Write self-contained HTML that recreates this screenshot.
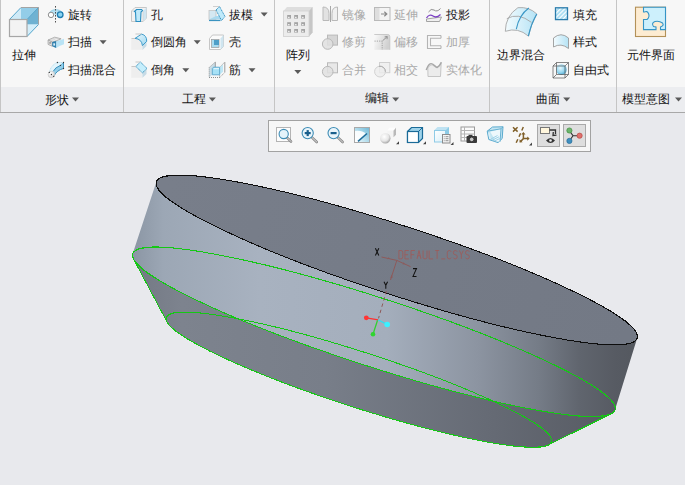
<!DOCTYPE html><html><head><meta charset="utf-8"><style>
html,body{margin:0;padding:0;width:685px;height:485px;overflow:hidden;background:#e8e9ed;}
body{position:relative;font-family:"Liberation Sans",sans-serif;}
.t{position:absolute;font-size:12.3px;line-height:12px;color:#151515;white-space:nowrap;}
.d{color:#a9a9a9;}
.tri{position:absolute;width:0;height:0;border-left:3.5px solid transparent;border-right:3.5px solid transparent;border-top:4px solid #5a5a5a;}
.sep{position:absolute;top:0;width:1px;height:112px;background:#c5c5c5;}
svg{position:absolute;overflow:visible}
</style></head><body>
<div style="position:absolute;left:0;top:0;width:685px;height:87px;background:#f7f7f7"></div>
<div style="position:absolute;left:0;top:87px;width:685px;height:25px;background:#ecedf0"></div>
<div style="position:absolute;left:0;top:112px;width:685px;height:1px;background:#a8a8a8"></div>

<div class="sep" style="left:0px"></div>
<div class="sep" style="left:123px"></div>
<div class="sep" style="left:274px"></div>
<div class="sep" style="left:489px"></div>
<div class="sep" style="left:616px"></div>
<svg style="left:0;top:0" width="685" height="113" viewBox="0 0 685 113">
<defs>
<linearGradient id="ib1" x1="0" y1="0" x2="1" y2="1"><stop offset="0" stop-color="#e9f7fd"/><stop offset="1" stop-color="#9fd8f0"/></linearGradient>
<linearGradient id="ib2" x1="0" y1="0" x2="1" y2="0"><stop offset="0" stop-color="#f3fbfe"/><stop offset="1" stop-color="#b5e3f5"/></linearGradient>
<linearGradient id="ig1" x1="0" y1="0" x2="1" y2="1"><stop offset="0" stop-color="#f8f8f8"/><stop offset="1" stop-color="#d5d5d5"/></linearGradient>
<radialGradient id="isph" cx="0.4" cy="0.35" r="0.7"><stop offset="0" stop-color="#e6f8fe"/><stop offset="0.6" stop-color="#96d6ef"/><stop offset="1" stop-color="#4aa3cc"/></radialGradient>
<radialGradient id="iwsph" cx="0.4" cy="0.35" r="0.7"><stop offset="0" stop-color="#ffffff"/><stop offset="1" stop-color="#cfcfcf"/></radialGradient>
<pattern id="hatch" width="3" height="3" patternUnits="userSpaceOnUse" patternTransform="rotate(45)"><rect width="3" height="3" fill="#a6dcf2"/><rect width="1.2" height="3" fill="#ffffff"/></pattern>
</defs>
<path d="M9.5,19.5 L21,7.5 L38.5,7.5 L38.5,24.5 L27,36.5 L9.5,36.5 Z" fill="#cfeaf7"/>
<path d="M21,7.5 L38.5,7.5 L27,19.5 L21,19.5 Z" fill="#93cde8"/>
<path d="M38.5,7.5 L38.5,24.5 L27,24.5 L27,19.5 Z" fill="#6fb2d2"/>
<path d="M38.5,24.5 L27,36.5 L27,24.5 Z" fill="#d4eefa"/>
<path d="M9.5,19.5 L21,7.5 M27,19.5 L38.5,7.5 M27,36.5 L38.5,24.5" stroke="#55a5cb" stroke-width="1"/>
<path d="M21,7.5 L38.5,7.5 L38.5,24.5" stroke="#a3a3a3" stroke-width="1" fill="none"/>
<rect x="9.5" y="19.5" width="17.5" height="17" fill="#f3f3f3" stroke="#a6a6a6" stroke-width="1.2"/>
<path d="M48.5,14.5 Q50,9.5 55.5,9.3 Q61.5,9.5 63.3,14.2 L60,14.5 L51,14.8 Z" fill="#b9e2f3"/>
<path d="M48.8,13 Q52,9.6 55.5,9.5 Q60,9.6 62.8,12.8" stroke="#8fcbe4" stroke-width="0.8" fill="none"/>
<circle cx="51" cy="14.9" r="2.7" fill="#fff" stroke="#8e8e8e" stroke-width="1"/>
<circle cx="60.2" cy="14.7" r="2.8" fill="#8ad3f1" stroke="#1f7db0" stroke-width="1.3"/>
<path d="M55.5,6 L55.5,22.5" stroke="#505050" stroke-width="1" stroke-dasharray="1.6,1.4"/>
<path d="M56.1,40.9 Q60,40.5 64,38.8 L64,44.2 Q60,45.5 56.1,47.9 Z" fill="#b9e3f5"/>
<path d="M48.1,40 L54.7,37.2 L61.1,38.8 L56.1,40.9 L52.2,42.1 Z" fill="#eeeeee" stroke="#a0a0a0" stroke-width="0.8"/>
<path d="M50,39.8 L55,37.9 L59,39 M50.5,41 L55.5,39" stroke="#c8c8c8" stroke-width="0.6" fill="none"/>
<path d="M48.1,40 L52.2,42.1 L52.2,46.2 L48.1,44.4 Z" fill="#e4e4e4" stroke="#a0a0a0" stroke-width="0.8"/>
<rect x="49.3" y="42" width="1.6" height="1.8" fill="#9a9a9a"/>
<path d="M52.2,42.1 L56.1,40.9 L56.1,47.9 L52.2,46.2 Z" fill="#2e7fae"/>
<rect x="53.3" y="43.3" width="1.8" height="2.3" fill="#dff2fb"/>
<path d="M49.3,72.4 Q51,65 57.4,62.5 L63.5,62.5 L60.5,65.4 Q55,67.5 53.2,71.4 Z" fill="#e3f5fc" stroke="#9fd3ea" stroke-width="0.8" stroke-dasharray="1,0.7"/>
<path d="M53.2,71.4 Q55,67.5 60.5,65.4 L63.5,62.5 L63.5,68.5 Q57,70 53.7,76.3 Z" fill="#93cfea"/>
<path d="M53.2,71.4 Q55,67.5 60.5,65.4 M63.5,62.5 L63.5,68.5 Q57,70 53.7,76.3" stroke="#2f88b6" stroke-width="0.9" fill="none"/>
<path d="M60.5,65.4 L63.5,62.5" stroke="#5aaad0" stroke-width="0.8"/>
<circle cx="51.4" cy="74.5" r="3.3" fill="url(#iwsph)" stroke="#c8c8c8" stroke-width="0.6"/>
<circle cx="51.4" cy="74.5" r="0.65" fill="#333"/>
<circle cx="49.3" cy="72.4" r="0.65" fill="#333"/>
<circle cx="57.4" cy="62.5" r="0.65" fill="#333"/>
<circle cx="63.5" cy="62.5" r="0.65" fill="#333"/>
<circle cx="63.5" cy="68.5" r="0.65" fill="#333"/>
<circle cx="60.5" cy="65.4" r="0.65" fill="#333"/>
<circle cx="53.7" cy="76.3" r="0.65" fill="#333"/>
<path d="M131.5,11 L135,7.5 L146.5,7.5 L146.5,18 L143,21.5 L131.5,21.5 Z" fill="#f2f2f2" stroke="#c2c2c2" stroke-width="0.9"/>
<path d="M143,11 L146.5,7.5 L146.5,18 L143,21.5 Z" fill="#cfe6f2"/>
<path d="M131.5,11 L143,11 L143,21.5" stroke="#d6d6d6" stroke-width="0.9" fill="none"/>
<path d="M134.5,11.5 L136.5,9.5 L141.5,9.5 L142.5,10.5 L141,12 L140.5,21.5 L136,21.5 L135.5,12 Z" fill="#bfe9fa" stroke="#2b8fc2" stroke-width="1.1"/>
<rect x="131.2" y="38.5" width="11.3" height="11.3" fill="#eeeeee"/>
<path d="M142.5,45.5 L146.5,41 L146.5,46 L142.5,50 Z" fill="#c6dbe6"/>
<path d="M135,38.4 L141.6,34.1 Q146.9,35.4 146.7,41.3 L142.4,45.6 Q141.8,39 135,38.4 Z" fill="url(#ib1)" stroke="#3e9ccb" stroke-width="1"/>
<path d="M131.5,38.5 L135,38.5 M135.5,34 L141.5,34" stroke="#bbb" stroke-width="0.8"/>
<rect x="131.2" y="66.5" width="11.3" height="11.3" fill="#eeeeee"/>
<path d="M142.5,72.5 L146.5,68.5 L146.5,74 L142.5,77.8 Z" fill="#c6dbe6"/>
<path d="M135.8,66.5 L140.4,62 L147,68.5 L142.4,72.8 Z" fill="#c5eefc" stroke="#3592c0" stroke-width="1" stroke-dasharray="1.2,0.6"/>
<path d="M131.5,66.5 L135.8,66.5 M135.5,62 L140,62" stroke="#bbb" stroke-width="0.8"/>
<rect x="209" y="10.5" width="7" height="9" fill="#d4e8f2" stroke="#c4c4c4" stroke-width="0.8"/>
<path d="M209,19.5 L221,19.5 L224.5,16 L216,16 Z" fill="#a9d9ef"/>
<path d="M209,20.5 L220.5,20.5" stroke="#3b93c0" stroke-width="1.2"/>
<path d="M216,10 L219.5,6.5 L225,16.5 L221.5,20.5 Z" fill="#bfeafb" stroke="#3592c0" stroke-width="1" stroke-dasharray="1.2,0.6"/>
<path d="M213,6.5 L219,6.5" stroke="#c8c8c8" stroke-width="0.9"/>
<path d="M209.5,38.5 L212.5,35 L223.5,35 L223.5,46.5 L220.5,49.5 L209.5,49.5 Z" fill="#fbfbfb" stroke="#c0c0c0" stroke-width="0.9"/>
<path d="M220.5,38.5 L223.5,35 L223.5,46.5 L220.5,49.5 Z" fill="#cfe5f0"/>
<rect x="211.5" y="39.5" width="7.5" height="8" fill="#a9dcf1" stroke="#9a9a9a" stroke-width="0.7"/>
<rect x="214" y="40" width="5" height="5" fill="#4e9fc8"/>
<path d="M209.2,67.5 L215.3,62 L215.3,72 L209.2,77.5 Z" fill="#c9dde7"/>
<path d="M215.3,62 L215.3,67.5 M224.8,62 L224.8,72.5" stroke="#9c9c9c" stroke-width="1"/>
<path d="M209.2,67.5 L209.2,77.5 L219.6,77.5 L224.8,72.5 M219.6,77.5 L219.6,67.5" stroke="#777" stroke-width="1" fill="none" stroke-dasharray="0.8,1.2"/>
<path d="M209.2,67.5 L215.3,62 M219.6,67.5 L224.8,62" stroke="#b5b5b5" stroke-width="0.8" fill="none"/>
<path d="M219.6,67.5 L223,64.5 L223,71.8 L219.6,74.8 Z" fill="#bfe6f5"/>
<path d="M212.3,68.5 L213.5,67.2 L219.6,67.2 L219.6,74.8 L212.3,74.8 Z" fill="#a6e1f6" stroke="#5aa6cd" stroke-width="0.9"/>
<path d="M213.8,68.7 L219,68.7" stroke="#ffffff" stroke-width="0.8"/>
<path d="M283.5,11 L287,7 L312.5,7 L312.5,32.5 L309,36.5 L283.5,36.5 Z" fill="#dedede"/>
<path d="M309,11 L312.5,7 L312.5,32.5 L309,36.5 Z" fill="#c6c6c6"/>
<rect x="283.5" y="11" width="25.5" height="25.5" fill="#ececec" stroke="#d2d2d2" stroke-width="0.8"/>
<rect x="287.2" y="15" width="3.8" height="3.6" fill="#a3a3a3"/><rect x="288.2" y="16.8" width="1.3" height="1.3" fill="#fff"/>
<rect x="294.2" y="15" width="3.8" height="3.6" fill="#a3a3a3"/><rect x="295.2" y="16.8" width="1.3" height="1.3" fill="#fff"/>
<rect x="301.2" y="15" width="3.8" height="3.6" fill="#a3a3a3"/><rect x="302.2" y="16.8" width="1.3" height="1.3" fill="#fff"/>
<rect x="287.2" y="22.2" width="3.8" height="3.6" fill="#a3a3a3"/><rect x="288.2" y="24.0" width="1.3" height="1.3" fill="#fff"/>
<rect x="294.2" y="22.2" width="3.8" height="3.6" fill="#a3a3a3"/><rect x="295.2" y="24.0" width="1.3" height="1.3" fill="#fff"/>
<rect x="301.2" y="22.2" width="3.8" height="3.6" fill="#a3a3a3"/><rect x="302.2" y="24.0" width="1.3" height="1.3" fill="#fff"/>
<rect x="287.2" y="29" width="3.8" height="3.6" fill="#a3a3a3"/><rect x="288.2" y="30.8" width="1.3" height="1.3" fill="#fff"/>
<rect x="294.2" y="29" width="3.8" height="3.6" fill="#a3a3a3"/><rect x="295.2" y="30.8" width="1.3" height="1.3" fill="#fff"/>
<rect x="301.2" y="29" width="3.8" height="3.6" fill="#a3a3a3"/><rect x="302.2" y="30.8" width="1.3" height="1.3" fill="#fff"/>
<path d="M323,20.5 L323,7 Q329,7 329,13.5 L329,20.5 Z" fill="#e2e2e2" stroke="#b9b9b9" stroke-width="1"/>
<path d="M337.5,20.5 L337.5,7 Q332,7 332,13.5 L332,20.5 Z" fill="#f0f0f0" stroke="#b9b9b9" stroke-width="1"/>
<path d="M330.5,6 L330.5,22" stroke="#9d9d9d" stroke-width="0.9"/>
<rect x="327.5" y="35.1" width="10" height="10" fill="#d6d6d6" stroke="#b9b9b9" stroke-width="1"/>
<circle cx="327.7" cy="44.0" r="5.3" fill="#e0e0e0" fill-opacity="0.85" stroke="#b9b9b9" stroke-width="1"/>
<rect x="327.5" y="62.8" width="10" height="10" fill="#e8e8e8" stroke="#b9b9b9" stroke-width="1"/>
<circle cx="327.7" cy="71.7" r="5.3" fill="#e0e0e0" fill-opacity="0.85" stroke="#b9b9b9" stroke-width="1"/>
<rect x="374.5" y="7.5" width="15.5" height="13" fill="#f4f4f4" stroke="#b9b9b9" stroke-width="1"/>
<rect x="375" y="8" width="4.5" height="12" fill="#dedede"/>
<path d="M381,14 L386.5,14 M384.3,11.8 L386.8,14 L384.3,16.2" stroke="#8a8a8a" stroke-width="1.2" fill="none"/>
<defs><linearGradient id="ig2" x1="0" y1="0" x2="1" y2="0.3"><stop offset="0" stop-color="#fafafa"/><stop offset="1" stop-color="#d0d0d0"/></linearGradient></defs>
<path d="M374.3,34.5 L387.8,34.5 Q389.8,34.5 389.8,36.5 L389.8,49.8 L374.3,49.8 Z" fill="url(#ig2)"/>
<path d="M374.3,34.5 L387.8,34.5 Q389.8,34.5 389.8,36.5 L389.8,49.8" stroke="#c4c4c4" stroke-width="0.9" fill="none"/>
<path d="M374.5,41.1 L382.2,41.1 L382.2,49.8" stroke="#9a9a9a" stroke-width="0.9" fill="none" stroke-dasharray="1.2,1.1"/>
<path d="M382.5,40.8 L386.8,37" stroke="#8a8a8a" stroke-width="0.9"/><path d="M384.6,36.9 L387.3,36.5 L387,39.2" stroke="#8a8a8a" stroke-width="0.9" fill="none"/>
<rect x="379.5" y="62.5" width="10.3" height="10.2" fill="#f0f0f0" stroke="#d0d0d0" stroke-width="1"/>
<circle cx="380" cy="71.6" r="5.4" fill="#ececec" fill-opacity="0.8" stroke="#d2d2d2" stroke-width="1"/>
<path d="M379,66.3 A5.4,5.4 0 0 1 385.4,71.8" stroke="#aaaaaa" stroke-width="1" fill="none"/>
<path d="M428.5,12 Q431,8 434,10 Q437,12.5 440.5,8.5" stroke="#8f8f8f" stroke-width="1" fill="none"/>
<path d="M426.5,19 L441.5,17 L439.5,21.5 L426.5,21.5 Z" fill="#f0f0f0" stroke="#9a9a9a" stroke-width="0.9"/>
<path d="M426.5,18 Q429.5,13.5 433,16 Q436.5,18.5 440.5,14.5" stroke="#7b3fc4" stroke-width="1.3" fill="none"/>
<path d="M441,35.5 L427.5,35.5 L427.5,48.5 L441,48.5" stroke="#b4b4b4" stroke-width="1.1" fill="none"/>
<path d="M441,38.3 L430.5,38.3 L430.5,45.7 L441,45.7" stroke="#b4b4b4" stroke-width="1.1" fill="none"/>
<path d="M441,35.5 L441,38.3 M441,45.7 L441,48.5" stroke="#b4b4b4" stroke-width="1.1"/>
<path d="M427.8,68 Q431,62.5 434.5,66.5 Q437.5,70 441.2,62.5 L440.5,76.5 L428,76.5 Z" fill="#ececec" stroke="#c0c0c0" stroke-width="0.9"/>
<path d="M426.2,70 Q429,62 432.5,64 Q435,66 437,67.5 Q439.5,66.5 441.3,62.3" stroke="#a8a8a8" stroke-width="1.4" fill="none"/>
<path d="M505.3,31.3 Q505.5,16 517.9,7.7 Q529,6.5 536.8,14 Q531,24 528.4,36.1 Q518,27 505.3,31.3 Z" fill="url(#ib2)" stroke="#a6a6a6" stroke-width="0.9"/>
<path d="M506.8,18.7 Q518,12 531.5,22.4" stroke="#a6a6a6" stroke-width="0.9" fill="none"/>
<path d="M528.9,8 Q519,15 516.3,29.2" stroke="#3a97c6" stroke-width="1.1" fill="none"/>
<path d="M536.8,14 Q531,24 528.4,36.1" stroke="#3a97c6" stroke-width="1.2" fill="none"/>
<rect x="555.5" y="7.8" width="12" height="11.8" fill="url(#hatch)" stroke="#2a7bab" stroke-width="1.3"/>
<path d="M553.5,38 Q561,31.5 568.5,38 L568.5,48.5 Q561,42.5 553.5,47 Z" fill="url(#ib2)" stroke="#9a9a9a" stroke-width="0.9"/>
<circle cx="561.4" cy="69.6" r="5.3" fill="url(#isph)"/>
<path d="M553,66 L556.5,62.5 L568.5,62.5 L568.5,74.5 L565,78 L553,78 Z M553,66 L565,66 L565,78 M565,66 L568.5,62.5 M553,78 L556.5,74.5 L568.5,74.5 M556.5,62.5 L556.5,74.5" stroke="#555" stroke-width="0.7" fill="none"/>
<rect x="635.5" y="7.2" width="30" height="29.3" fill="#fdecd2" stroke="#b39158" stroke-width="1.1"/>
<path d="M643.5,7.2 L665.5,7.2 L665.5,29.6 L660.5,29.6 L660.5,27 Q664.5,25.5 662.5,23 Q659,20.5 655,21.5 Q651,23 653.5,26.5 L656,27 L656,29.6 L643.5,29.6 L643.5,19.5 L647,19.5 Q650,17 648.5,13.5 Q647,10.5 644.5,12 L643.5,12 Z" fill="#cdf0fc" stroke="#3594c6" stroke-width="1.1"/>
</svg>
<div class="t" style="left:12.3px;top:48.9px">拉伸</div>
<div class="t" style="left:68.0px;top:8.7px">旋转</div>
<div class="t" style="left:68.0px;top:35.9px">扫描</div>
<div class="t" style="left:68.0px;top:63.9px">扫描混合</div>
<div class="t" style="left:44.6px;top:93.5px">形状</div>
<div class="t" style="left:151.2px;top:8.7px">孔</div>
<div class="t" style="left:151.2px;top:35.9px">倒圆角</div>
<div class="t" style="left:151.2px;top:63.9px">倒角</div>
<div class="t" style="left:229.2px;top:8.7px">拔模</div>
<div class="t" style="left:229.2px;top:35.9px">壳</div>
<div class="t" style="left:229.2px;top:63.9px">筋</div>
<div class="t" style="left:182.0px;top:92.7px">工程</div>
<div class="t" style="left:286.2px;top:48.8px">阵列</div>
<div class="t d" style="left:342.0px;top:8.7px">镜像</div>
<div class="t d" style="left:342.0px;top:35.9px">修剪</div>
<div class="t d" style="left:342.0px;top:63.9px">合并</div>
<div class="t d" style="left:393.5px;top:8.7px">延伸</div>
<div class="t d" style="left:393.5px;top:35.9px">偏移</div>
<div class="t d" style="left:393.5px;top:63.9px">相交</div>
<div class="t" style="left:446.2px;top:8.7px">投影</div>
<div class="t d" style="left:446.2px;top:35.9px">加厚</div>
<div class="t d" style="left:446.2px;top:63.9px">实体化</div>
<div class="t" style="left:364.8px;top:92.3px">编辑</div>
<div class="t" style="left:496.8px;top:48.8px">边界混合</div>
<div class="t" style="left:573.2px;top:8.7px">填充</div>
<div class="t" style="left:573.2px;top:35.9px">样式</div>
<div class="t" style="left:573.2px;top:63.9px">自由式</div>
<div class="t" style="left:536.3px;top:93.4px">曲面</div>
<div class="t" style="left:627.0px;top:48.8px">元件界面</div>
<div class="t" style="left:622.0px;top:92.9px">模型意图</div>
<svg style="left:0;top:0" width="685" height="113"><path d="M99.6,40.3 l7,0 l-3.5,4 z" fill="#5a5a5a"/><path d="M72.0,97.5 l7,0 l-3.5,4 z" fill="#5a5a5a"/><path d="M193.7,40.3 l7,0 l-3.5,4 z" fill="#5a5a5a"/><path d="M182.3,68.3 l7,0 l-3.5,4 z" fill="#5a5a5a"/><path d="M260.7,12.5 l7,0 l-3.5,4 z" fill="#5a5a5a"/><path d="M248.5,68.3 l7,0 l-3.5,4 z" fill="#5a5a5a"/><path d="M208.9,97.5 l7,0 l-3.5,4 z" fill="#5a5a5a"/><path d="M294.3,70.0 l7,0 l-3.5,4 z" fill="#5a5a5a"/><path d="M392.2,97.5 l7,0 l-3.5,4 z" fill="#5a5a5a"/><path d="M563.2,97.5 l7,0 l-3.5,4 z" fill="#5a5a5a"/><path d="M675.0,97.5 l7,0 l-3.5,4 z" fill="#5a5a5a"/></svg>
<svg style="left:0;top:0" width="685" height="485" viewBox="0 0 685 485">
<defs>
<linearGradient id="gc" gradientUnits="userSpaceOnUse" x1="133" y1="0" x2="640" y2="0">
<stop offset="0" stop-color="#8b96a4"/><stop offset="0.06" stop-color="#9ca7b5"/><stop offset="0.25" stop-color="#a8b2c0"/><stop offset="0.5" stop-color="#a4aebc"/><stop offset="0.68" stop-color="#8c94a1"/><stop offset="0.8" stop-color="#757c87"/><stop offset="0.88" stop-color="#60656e"/><stop offset="0.95" stop-color="#575b63"/><stop offset="1" stop-color="#54585f"/></linearGradient>
<linearGradient id="gh" gradientUnits="userSpaceOnUse" x1="133" y1="0" x2="615" y2="0">
<stop offset="0" stop-color="#737984"/><stop offset="0.1" stop-color="#7d838e"/><stop offset="0.4" stop-color="#787e89"/><stop offset="0.75" stop-color="#656a74"/><stop offset="1" stop-color="#575b63"/></linearGradient>
<linearGradient id="gt" gradientUnits="userSpaceOnUse" x1="155" y1="0" x2="638" y2="0">
<stop offset="0" stop-color="#787e8a"/><stop offset="1" stop-color="#737985"/></linearGradient>
</defs>
<path d="M132.5,255.3 L132.5,255.0 L132.5,254.7 L132.6,254.4 L132.7,254.1 L132.7,253.8 L132.8,253.5 L133.0,253.2 L133.1,253.0 L133.3,252.7 L133.4,252.4 L133.6,252.2 L133.8,251.9 L134.1,251.7 L134.3,251.5 L134.6,251.2 L134.9,251.0 L135.2,250.8 L135.5,250.6 L135.8,250.4 L136.2,250.2 L136.6,250.0 L137.0,249.8 L137.4,249.6 L137.8,249.4 L138.2,249.3 L138.7,249.1 L139.2,249.0 L139.7,248.8 L140.2,248.7 L140.8,248.5 L141.3,248.4 L141.9,248.3 L142.5,248.2 L143.1,248.1 L143.7,248.0 L144.3,247.9 L145.0,247.8 L145.7,247.7 L146.4,247.6 L147.1,247.5 L147.8,247.5 L148.6,247.4 L149.3,247.4 L150.1,247.3 L150.9,247.3 L151.7,247.2 L152.6,247.2 L153.4,247.2 L154.3,247.2 L155.2,247.2 L156.1,247.2 L157.0,247.2 L157.9,247.2 L158.9,247.2 L159.8,247.2 L160.8,247.3 L161.8,247.3 L162.8,247.3 L163.8,247.4 L164.9,247.4 L166.0,247.5 L167.0,247.6 L168.1,247.7 L169.2,247.7 L170.4,247.8 L171.5,247.9 L172.7,248.0 L173.8,248.1 L175.0,248.3 L176.2,248.4 L177.4,248.5 L178.7,248.6 L179.9,248.8 L181.2,248.9 L182.4,249.1 L183.7,249.2 L185.0,249.4 L186.4,249.6 L187.7,249.7 L189.0,249.9 L190.4,250.1 L191.8,250.3 L193.2,250.5 L194.6,250.7 L196.0,250.9 L197.4,251.2 L198.9,251.4 L200.3,251.6 L201.8,251.9 L203.3,252.1 L204.8,252.4 L206.3,252.6 L207.8,252.9 L209.3,253.2 L210.9,253.4 L212.4,253.7 L214.0,254.0 L215.6,254.3 L217.2,254.6 L218.8,254.9 L220.4,255.2 L222.1,255.5 L223.7,255.9 L225.4,256.2 L227.0,256.5 L228.7,256.9 L230.4,257.2 L232.1,257.6 L233.8,257.9 L235.5,258.3 L237.2,258.6 L239.0,259.0 L240.7,259.4 L242.5,259.8 L244.3,260.2 L246.1,260.6 L247.8,261.0 L249.6,261.4 L251.5,261.8 L253.3,262.2 L255.1,262.6 L256.9,263.1 L258.8,263.5 L260.6,263.9 L262.5,264.4 L264.4,264.8 L266.3,265.3 L268.2,265.7 L270.1,266.2 L272.0,266.7 L273.9,267.1 L275.8,267.6 L277.7,268.1 L279.7,268.6 L281.6,269.1 L283.5,269.6 L285.5,270.1 L287.5,270.6 L289.4,271.1 L291.4,271.6 L293.4,272.1 L295.4,272.7 L297.4,273.2 L299.4,273.7 L301.4,274.3 L303.4,274.8 L305.4,275.4 L307.4,275.9 L309.5,276.5 L311.5,277.0 L313.5,277.6 L315.6,278.2 L317.6,278.8 L319.7,279.3 L321.7,279.9 L323.8,280.5 L325.9,281.1 L327.9,281.7 L330.0,282.3 L332.1,282.9 L334.1,283.5 L336.2,284.1 L338.3,284.7 L340.4,285.3 L342.5,285.9 L344.6,286.6 L346.7,287.2 L348.7,287.8 L350.8,288.4 L352.9,289.1 L355.0,289.7 L357.1,290.4 L359.2,291.0 L361.3,291.7 L363.4,292.3 L365.6,293.0 L367.7,293.6 L369.8,294.3 L371.9,294.9 L374.0,295.6 L376.1,296.3 L378.2,297.0 L380.3,297.6 L382.4,298.3 L384.5,299.0 L386.6,299.7 L388.7,300.4 L390.8,301.0 L392.9,301.7 L395.0,302.4 L397.1,303.1 L399.2,303.8 L401.3,304.5 L403.4,305.2 L405.5,305.9 L407.6,306.6 L409.7,307.3 L411.7,308.0 L413.8,308.7 L415.9,309.5 L418.0,310.2 L420.0,310.9 L422.1,311.6 L424.2,312.3 L426.2,313.0 L428.3,313.8 L430.3,314.5 L432.4,315.2 L434.4,315.9 L436.4,316.7 L438.5,317.4 L440.5,318.1 L442.5,318.8 L444.5,319.6 L446.6,320.3 L448.6,321.0 L450.6,321.8 L452.6,322.5 L454.5,323.2 L456.5,324.0 L458.5,324.7 L460.5,325.4 L462.4,326.2 L464.4,326.9 L466.3,327.7 L468.3,328.4 L470.2,329.1 L472.1,329.9 L474.1,330.6 L476.0,331.3 L477.9,332.1 L479.8,332.8 L481.7,333.6 L483.5,334.3 L485.4,335.0 L487.3,335.8 L489.1,336.5 L491.0,337.3 L492.8,338.0 L494.7,338.7 L496.5,339.5 L498.3,340.2 L500.1,340.9 L501.9,341.7 L503.7,342.4 L505.4,343.1 L507.2,343.9 L508.9,344.6 L510.7,345.3 L512.4,346.1 L514.1,346.8 L515.8,347.5 L517.5,348.2 L519.2,349.0 L520.9,349.7 L522.6,350.4 L524.2,351.1 L525.9,351.8 L527.5,352.6 L529.1,353.3 L530.7,354.0 L532.3,354.7 L533.9,355.4 L535.5,356.1 L537.0,356.8 L538.6,357.5 L540.1,358.2 L541.6,358.9 L543.1,359.6 L544.6,360.3 L546.1,361.0 L547.6,361.7 L549.0,362.4 L550.5,363.1 L551.9,363.8 L553.3,364.5 L554.7,365.1 L556.1,365.8 L557.5,366.5 L558.8,367.2 L560.2,367.8 L561.5,368.5 L562.8,369.2 L564.1,369.8 L565.4,370.5 L566.7,371.1 L568.0,371.8 L569.2,372.4 L570.4,373.1 L571.7,373.7 L572.9,374.4 L574.0,375.0 L575.2,375.6 L576.4,376.3 L577.5,376.9 L578.6,377.5 L579.7,378.1 L580.8,378.8 L581.9,379.4 L583.0,380.0 L584.0,380.6 L585.0,381.2 L586.0,381.8 L587.0,382.4 L588.0,383.0 L589.0,383.6 L589.9,384.1 L590.9,384.7 L591.8,385.3 L592.7,385.9 L593.6,386.4 L594.4,387.0 L595.3,387.6 L596.1,388.1 L596.9,388.7 L597.7,389.2 L598.5,389.7 L599.3,390.3 L600.0,390.8 L600.7,391.3 L601.4,391.9 L602.1,392.4 L602.8,392.9 L603.5,393.4 L604.1,393.9 L604.7,394.4 L605.3,394.9 L605.9,395.4 L606.5,395.9 L607.1,396.4 L607.6,396.8 L608.1,397.3 L608.6,397.8 L609.1,398.2 L609.6,398.7 L610.0,399.1 L610.4,399.6 L610.8,400.0 L611.2,400.5 L611.6,400.9 L612.0,401.3 L612.3,401.7 L612.6,402.1 L612.9,402.6 L613.2,403.0 L613.5,403.4 L613.7,403.7 L613.9,404.1 L614.2,404.5 L614.3,404.9 L614.5,405.3 L614.7,405.6 L614.8,406.0 L614.9,406.3 L615.0,406.7 L615.1,407.0 L615.2,407.4 L615.2,407.7 L615.2,408.0 L615.3,408.3 L615.2,408.7 L615.2,409.0 L615.2,409.3 L615.1,409.6 L615.0,409.8 L614.9,410.1 L614.8,410.4 L614.7,410.7 L614.5,410.9 L614.3,411.2 L614.1,411.5 L613.9,411.7 L613.7,411.9 L613.4,412.2 L613.2,412.4 L612.9,412.6 L612.6,412.9 L612.3,413.1 L611.9,413.3 L611.6,413.5 L611.2,413.7 L548.5,444.9 L548.2,445.1 L547.8,445.2 L547.5,445.4 L547.1,445.5 L546.8,445.6 L546.4,445.7 L546.0,445.9 L545.6,446.0 L545.1,446.1 L544.7,446.2 L544.2,446.3 L543.8,446.4 L543.3,446.5 L542.8,446.6 L542.3,446.7 L541.7,446.7 L541.2,446.8 L540.6,446.9 L540.1,446.9 L539.5,447.0 L538.9,447.0 L538.3,447.1 L537.7,447.1 L537.0,447.1 L536.4,447.2 L535.7,447.2 L535.0,447.2 L534.3,447.2 L533.6,447.2 L532.9,447.2 L532.2,447.2 L531.4,447.2 L530.7,447.2 L529.9,447.2 L529.1,447.2 L528.3,447.1 L527.5,447.1 L526.7,447.1 L525.8,447.0 L525.0,447.0 L524.1,446.9 L523.3,446.9 L522.4,446.8 L521.5,446.7 L520.6,446.7 L519.6,446.6 L518.7,446.5 L517.8,446.4 L516.8,446.3 L515.8,446.2 L514.8,446.1 L513.9,446.0 L512.8,445.9 L511.8,445.8 L510.8,445.6 L509.8,445.5 L508.7,445.4 L507.6,445.2 L506.6,445.1 L505.5,444.9 L504.4,444.8 L503.3,444.6 L502.1,444.5 L501.0,444.3 L499.9,444.1 L498.7,443.9 L497.5,443.8 L496.4,443.6 L495.2,443.4 L494.0,443.2 L492.8,443.0 L491.6,442.8 L490.3,442.6 L489.1,442.3 L487.9,442.1 L486.6,441.9 L485.3,441.7 L484.1,441.4 L482.8,441.2 L481.5,440.9 L480.2,440.7 L478.9,440.4 L477.5,440.2 L476.2,439.9 L474.9,439.6 L473.5,439.3 L472.2,439.1 L470.8,438.8 L469.4,438.5 L468.0,438.2 L466.6,437.9 L465.2,437.6 L463.8,437.3 L462.4,437.0 L461.0,436.7 L459.6,436.4 L458.1,436.0 L456.7,435.7 L455.2,435.4 L453.8,435.0 L452.3,434.7 L450.8,434.4 L449.3,434.0 L447.8,433.7 L446.4,433.3 L444.8,432.9 L443.3,432.6 L441.8,432.2 L440.3,431.8 L438.8,431.5 L437.2,431.1 L435.7,430.7 L434.1,430.3 L432.6,429.9 L431.0,429.5 L429.5,429.1 L427.9,428.7 L426.3,428.3 L424.8,427.9 L423.2,427.5 L421.6,427.1 L420.0,426.6 L418.4,426.2 L416.8,425.8 L415.2,425.4 L413.6,424.9 L412.0,424.5 L410.3,424.0 L408.7,423.6 L407.1,423.1 L405.4,422.7 L403.8,422.2 L402.2,421.8 L400.5,421.3 L398.9,420.8 L397.2,420.4 L395.6,419.9 L393.9,419.4 L392.3,419.0 L390.6,418.5 L389.0,418.0 L387.3,417.5 L385.6,417.0 L384.0,416.5 L382.3,416.0 L380.6,415.5 L379.0,415.0 L377.3,414.5 L375.6,414.0 L373.9,413.5 L372.2,413.0 L370.6,412.5 L368.9,412.0 L367.2,411.4 L365.5,410.9 L363.8,410.4 L362.2,409.9 L360.5,409.3 L358.8,408.8 L357.1,408.3 L355.4,407.7 L353.7,407.2 L352.1,406.7 L350.4,406.1 L348.7,405.6 L347.0,405.0 L345.3,404.5 L343.7,403.9 L342.0,403.4 L340.3,402.8 L338.6,402.3 L337.0,401.7 L335.3,401.2 L333.6,400.6 L332.0,400.1 L330.3,399.5 L328.6,398.9 L327.0,398.4 L325.3,397.8 L323.7,397.2 L322.0,396.7 L320.4,396.1 L318.7,395.5 L317.1,394.9 L315.4,394.4 L313.8,393.8 L312.1,393.2 L310.5,392.6 L308.9,392.1 L307.3,391.5 L305.6,390.9 L304.0,390.3 L302.4,389.7 L300.8,389.1 L299.2,388.6 L297.6,388.0 L296.0,387.4 L294.4,386.8 L292.8,386.2 L291.3,385.6 L289.7,385.0 L288.1,384.5 L286.6,383.9 L285.0,383.3 L283.5,382.7 L281.9,382.1 L280.4,381.5 L278.8,380.9 L277.3,380.3 L275.8,379.7 L274.3,379.2 L272.8,378.6 L271.3,378.0 L269.8,377.4 L268.3,376.8 L266.8,376.2 L265.3,375.6 L263.9,375.0 L262.4,374.4 L260.9,373.9 L259.5,373.3 L258.1,372.7 L256.6,372.1 L255.2,371.5 L253.8,370.9 L252.4,370.3 L251.0,369.8 L249.6,369.2 L248.2,368.6 L246.8,368.0 L245.5,367.4 L244.1,366.9 L242.8,366.3 L241.4,365.7 L240.1,365.1 L238.8,364.6 L237.5,364.0 L236.2,363.4 L234.9,362.8 L233.6,362.3 L232.3,361.7 L231.0,361.1 L229.8,360.6 L228.5,360.0 L227.3,359.4 L226.1,358.9 L224.9,358.3 L223.7,357.8 L222.5,357.2 L221.3,356.6 L220.1,356.1 L219.0,355.5 L217.8,355.0 L216.7,354.4 L215.5,353.9 L214.4,353.4 L213.3,352.8 L212.2,352.3 L211.1,351.7 L210.0,351.2 L209.0,350.7 L207.9,350.1 L206.9,349.6 L205.9,349.1 L204.8,348.6 L203.8,348.0 L202.8,347.5 L201.9,347.0 L200.9,346.5 L199.9,346.0 L199.0,345.5 L198.0,345.0 L197.1,344.5 L196.2,344.0 L195.3,343.5 L194.4,343.0 L193.6,342.5 L192.7,342.0 L191.9,341.5 L191.0,341.0 L190.2,340.5 L189.4,340.0 L188.6,339.6 L187.8,339.1 L187.0,338.6 L186.3,338.2 L185.5,337.7 L184.8,337.2 L184.1,336.8 L183.4,336.3 L182.7,335.9 L182.0,335.4 L181.4,335.0 L180.7,334.5 L180.1,334.1 L179.5,333.7 L178.8,333.2 L178.2,332.8 L177.7,332.4 L177.1,332.0 L176.5,331.6 L176.0,331.2 L175.5,330.7 L175.0,330.3 L174.5,329.9 L174.0,329.5 L173.5,329.1 L173.1,328.8 L172.6,328.4 L172.2,328.0 L171.8,327.6 L171.4,327.2 L171.0,326.9 L170.6,326.5 L170.3,326.1 L169.9,325.8 L169.6,325.4 L169.3,325.1 L169.0,324.7 L168.7,324.4 L168.4,324.1 L168.2,323.7 L167.9,323.4 L167.7,323.1 L167.5,322.8 L167.3,322.5 L167.1,322.1 L167.0,321.8 L133.6,259.1 L133.4,258.7 L133.2,258.4 L133.1,258.0 L132.9,257.7 L132.8,257.3 L132.7,257.0 L132.6,256.6 L132.6,256.3 L132.5,255.9 L132.5,255.6Z" fill="url(#gh)"/>
<path d="M132.5,255.3 L132.5,255.0 L132.5,254.7 L132.6,254.4 L132.7,254.1 L132.7,253.8 L156.3,181.9 L156.4,181.7 L156.6,181.4 L156.7,181.1 L156.8,180.8 L157.0,180.6 L157.2,180.3 L157.4,180.1 L157.7,179.8 L157.9,179.6 L158.2,179.4 L158.5,179.1 L158.8,178.9 L159.1,178.7 L159.4,178.5 L159.8,178.3 L160.2,178.1 L160.6,177.9 L161.0,177.7 L161.4,177.6 L161.8,177.4 L162.3,177.2 L162.8,177.1 L163.3,176.9 L163.8,176.8 L164.4,176.6 L164.9,176.5 L165.5,176.4 L166.1,176.3 L166.7,176.1 L167.3,176.0 L167.9,175.9 L168.6,175.9 L169.3,175.8 L170.0,175.7 L170.7,175.6 L171.4,175.5 L172.2,175.5 L172.9,175.4 L173.7,175.4 L174.5,175.3 L175.3,175.3 L176.1,175.3 L177.0,175.3 L177.9,175.2 L178.7,175.2 L179.6,175.2 L180.5,175.2 L181.5,175.2 L182.4,175.3 L183.4,175.3 L184.4,175.3 L185.4,175.3 L186.4,175.4 L187.4,175.4 L188.5,175.5 L189.5,175.6 L190.6,175.6 L191.7,175.7 L192.8,175.8 L193.9,175.9 L195.0,176.0 L196.2,176.1 L197.4,176.2 L198.5,176.3 L199.7,176.4 L201.0,176.5 L202.2,176.7 L203.4,176.8 L204.7,176.9 L206.0,177.1 L207.3,177.3 L208.6,177.4 L209.9,177.6 L211.2,177.8 L212.5,177.9 L213.9,178.1 L215.3,178.3 L216.7,178.5 L218.1,178.7 L219.5,179.0 L220.9,179.2 L222.3,179.4 L223.8,179.6 L225.3,179.9 L226.7,180.1 L228.2,180.4 L229.7,180.6 L231.3,180.9 L232.8,181.2 L234.3,181.4 L235.9,181.7 L237.5,182.0 L239.0,182.3 L240.6,182.6 L242.2,182.9 L243.9,183.2 L245.5,183.5 L247.1,183.8 L248.8,184.2 L250.4,184.5 L252.1,184.8 L253.8,185.2 L255.5,185.5 L257.2,185.9 L258.9,186.3 L260.6,186.6 L262.4,187.0 L264.1,187.4 L265.9,187.8 L267.6,188.1 L269.4,188.5 L271.2,188.9 L273.0,189.4 L274.8,189.8 L276.6,190.2 L278.5,190.6 L280.3,191.0 L282.1,191.5 L284.0,191.9 L285.8,192.3 L287.7,192.8 L289.6,193.2 L291.5,193.7 L293.4,194.2 L295.3,194.6 L297.2,195.1 L299.1,195.6 L301.0,196.1 L302.9,196.6 L304.9,197.1 L306.8,197.6 L308.8,198.1 L310.7,198.6 L312.7,199.1 L314.7,199.6 L316.6,200.1 L318.6,200.6 L320.6,201.2 L322.6,201.7 L324.6,202.2 L326.6,202.8 L328.6,203.3 L330.6,203.9 L332.7,204.4 L334.7,205.0 L336.7,205.6 L338.8,206.1 L340.8,206.7 L342.8,207.3 L344.9,207.9 L346.9,208.5 L349.0,209.0 L351.1,209.6 L353.1,210.2 L355.2,210.8 L357.3,211.4 L359.3,212.0 L361.4,212.7 L363.5,213.3 L365.6,213.9 L367.7,214.5 L369.7,215.1 L371.8,215.8 L373.9,216.4 L376.0,217.0 L378.1,217.7 L380.2,218.3 L382.3,219.0 L384.4,219.6 L386.5,220.3 L388.6,220.9 L390.7,221.6 L392.8,222.2 L394.9,222.9 L397.0,223.6 L399.1,224.2 L401.2,224.9 L403.3,225.6 L405.4,226.3 L407.5,226.9 L409.6,227.6 L411.7,228.3 L413.8,229.0 L415.9,229.7 L418.0,230.4 L420.1,231.1 L422.1,231.8 L424.2,232.5 L426.3,233.2 L428.4,233.9 L430.5,234.6 L432.6,235.3 L434.6,236.0 L436.7,236.7 L438.8,237.4 L440.8,238.1 L442.9,238.9 L445.0,239.6 L447.0,240.3 L449.1,241.0 L451.1,241.7 L453.2,242.5 L455.2,243.2 L457.2,243.9 L459.3,244.6 L461.3,245.4 L463.3,246.1 L465.3,246.8 L467.3,247.5 L469.3,248.3 L471.3,249.0 L473.3,249.7 L475.3,250.5 L477.3,251.2 L479.3,252.0 L481.3,252.7 L483.2,253.4 L485.2,254.2 L487.1,254.9 L489.1,255.6 L491.0,256.4 L492.9,257.1 L494.9,257.9 L496.8,258.6 L498.7,259.3 L500.6,260.1 L502.5,260.8 L504.3,261.6 L506.2,262.3 L508.1,263.0 L509.9,263.8 L511.8,264.5 L513.6,265.3 L515.5,266.0 L517.3,266.7 L519.1,267.5 L520.9,268.2 L522.7,268.9 L524.5,269.7 L526.3,270.4 L528.0,271.1 L529.8,271.9 L531.5,272.6 L533.3,273.3 L535.0,274.1 L536.7,274.8 L538.4,275.5 L540.1,276.3 L541.8,277.0 L543.4,277.7 L545.1,278.4 L546.8,279.2 L548.4,279.9 L550.0,280.6 L551.6,281.3 L553.2,282.0 L554.8,282.7 L556.4,283.4 L558.0,284.2 L559.5,284.9 L561.1,285.6 L562.6,286.3 L564.1,287.0 L565.6,287.7 L567.1,288.4 L568.6,289.1 L570.0,289.8 L571.5,290.5 L572.9,291.2 L574.3,291.8 L575.8,292.5 L577.2,293.2 L578.5,293.9 L579.9,294.6 L581.3,295.2 L582.6,295.9 L583.9,296.6 L585.2,297.2 L586.5,297.9 L587.8,298.6 L589.1,299.2 L590.3,299.9 L591.6,300.5 L592.8,301.2 L594.0,301.8 L595.2,302.5 L596.4,303.1 L597.6,303.7 L598.7,304.4 L599.8,305.0 L601.0,305.6 L602.1,306.2 L603.2,306.9 L604.2,307.5 L605.3,308.1 L606.3,308.7 L607.4,309.3 L608.4,309.9 L609.4,310.5 L610.3,311.1 L611.3,311.7 L612.2,312.3 L613.2,312.8 L614.1,313.4 L615.0,314.0 L615.8,314.6 L616.7,315.1 L617.5,315.7 L618.4,316.2 L619.2,316.8 L620.0,317.3 L620.8,317.9 L621.5,318.4 L622.3,319.0 L623.0,319.5 L623.7,320.0 L624.4,320.5 L625.1,321.0 L625.7,321.6 L626.3,322.1 L627.0,322.6 L627.6,323.1 L628.2,323.6 L628.7,324.0 L629.3,324.5 L629.8,325.0 L630.3,325.5 L630.8,325.9 L631.3,326.4 L631.8,326.9 L632.2,327.3 L632.6,327.8 L633.0,328.2 L633.4,328.6 L633.8,329.1 L634.1,329.5 L634.5,329.9 L634.8,330.3 L635.1,330.7 L635.4,331.2 L635.6,331.6 L635.9,331.9 L636.1,332.3 L636.3,332.7 L636.5,333.1 L636.7,333.5 L636.8,333.8 L637.0,334.2 L637.1,334.6 L637.2,334.9 L637.3,335.2 L637.3,335.6 L637.4,335.9 L637.4,336.2 L637.4,336.6 L637.4,336.9 L637.4,337.2 L637.3,337.5 L637.3,337.8 L637.2,338.1 L615.0,409.8 L614.9,410.1 L614.8,410.4 L614.7,410.7 L614.5,410.9 L614.3,411.2 L614.1,411.5 L613.9,411.7 L613.7,411.9 L613.4,412.2 L613.2,412.4 L612.9,412.6 L612.6,412.9 L612.3,413.1 L611.9,413.3 L611.6,413.5 L611.2,413.7 L610.8,413.8 L610.4,414.0 L610.0,414.2 L609.5,414.4 L609.0,414.5 L608.6,414.7 L608.1,414.8 L607.5,415.0 L607.0,415.1 L606.5,415.2 L605.9,415.4 L605.3,415.5 L604.7,415.6 L604.1,415.7 L603.4,415.8 L602.8,415.9 L602.1,416.0 L601.4,416.0 L600.7,416.1 L599.9,416.2 L599.2,416.2 L598.4,416.3 L597.6,416.3 L596.8,416.4 L596.0,416.4 L595.2,416.4 L594.3,416.5 L593.5,416.5 L592.6,416.5 L591.7,416.5 L590.8,416.5 L589.9,416.5 L588.9,416.4 L587.9,416.4 L587.0,416.4 L586.0,416.3 L584.9,416.3 L583.9,416.2 L582.9,416.2 L581.8,416.1 L580.7,416.1 L579.6,416.0 L578.5,415.9 L577.4,415.8 L576.3,415.7 L575.1,415.6 L573.9,415.5 L572.7,415.4 L571.5,415.3 L570.3,415.1 L569.1,415.0 L567.9,414.9 L566.6,414.7 L565.3,414.6 L564.0,414.4 L562.7,414.2 L561.4,414.1 L560.1,413.9 L558.7,413.7 L557.4,413.5 L556.0,413.3 L554.6,413.1 L553.2,412.9 L551.8,412.7 L550.3,412.5 L548.9,412.2 L547.4,412.0 L546.0,411.8 L544.5,411.5 L543.0,411.3 L541.5,411.0 L540.0,410.8 L538.4,410.5 L536.9,410.2 L535.3,409.9 L533.7,409.6 L532.2,409.3 L530.6,409.0 L529.0,408.7 L527.3,408.4 L525.7,408.1 L524.1,407.8 L522.4,407.5 L520.7,407.1 L519.1,406.8 L517.4,406.4 L515.7,406.1 L514.0,405.7 L512.2,405.4 L510.5,405.0 L508.8,404.6 L507.0,404.2 L505.3,403.9 L503.5,403.5 L501.7,403.1 L499.9,402.7 L498.1,402.3 L496.3,401.9 L494.5,401.4 L492.7,401.0 L490.8,400.6 L489.0,400.2 L487.1,399.7 L485.2,399.3 L483.4,398.8 L481.5,398.4 L479.6,397.9 L477.7,397.4 L475.8,397.0 L473.9,396.5 L472.0,396.0 L470.0,395.5 L468.1,395.0 L466.2,394.6 L464.2,394.1 L462.3,393.6 L460.3,393.0 L458.3,392.5 L456.3,392.0 L454.4,391.5 L452.4,391.0 L450.4,390.4 L448.4,389.9 L446.4,389.4 L444.4,388.8 L442.3,388.3 L440.3,387.7 L438.3,387.2 L436.3,386.6 L434.2,386.0 L432.2,385.5 L430.1,384.9 L428.1,384.3 L426.0,383.7 L424.0,383.1 L421.9,382.6 L419.8,382.0 L417.8,381.4 L415.7,380.8 L413.6,380.2 L411.5,379.6 L409.5,378.9 L407.4,378.3 L405.3,377.7 L403.2,377.1 L401.1,376.5 L399.0,375.8 L396.9,375.2 L394.8,374.6 L392.7,373.9 L390.6,373.3 L388.5,372.6 L386.4,372.0 L384.3,371.3 L382.2,370.7 L380.1,370.0 L378.0,369.4 L375.9,368.7 L373.8,368.0 L371.7,367.4 L369.6,366.7 L367.5,366.0 L365.4,365.3 L363.3,364.7 L361.2,364.0 L359.0,363.3 L356.9,362.6 L354.8,361.9 L352.7,361.2 L350.7,360.5 L348.6,359.8 L346.5,359.1 L344.4,358.4 L342.3,357.7 L340.2,357.0 L338.1,356.3 L336.0,355.6 L333.9,354.9 L331.9,354.2 L329.8,353.5 L327.7,352.8 L325.7,352.0 L323.6,351.3 L321.5,350.6 L319.5,349.9 L317.4,349.2 L315.4,348.4 L313.4,347.7 L311.3,347.0 L309.3,346.3 L307.3,345.5 L305.2,344.8 L303.2,344.1 L301.2,343.3 L299.2,342.6 L297.2,341.9 L295.2,341.1 L293.2,340.4 L291.2,339.7 L289.3,338.9 L287.3,338.2 L285.3,337.5 L283.4,336.7 L281.4,336.0 L279.5,335.2 L277.5,334.5 L275.6,333.8 L273.7,333.0 L271.8,332.3 L269.9,331.6 L268.0,330.8 L266.1,330.1 L264.2,329.3 L262.3,328.6 L260.5,327.9 L258.6,327.1 L256.8,326.4 L254.9,325.7 L253.1,324.9 L251.3,324.2 L249.5,323.4 L247.7,322.7 L245.9,322.0 L244.1,321.2 L242.3,320.5 L240.6,319.8 L238.8,319.0 L237.1,318.3 L235.4,317.6 L233.6,316.9 L231.9,316.1 L230.2,315.4 L228.5,314.7 L226.9,314.0 L225.2,313.2 L223.5,312.5 L221.9,311.8 L220.3,311.1 L218.7,310.4 L217.0,309.7 L215.5,308.9 L213.9,308.2 L212.3,307.5 L210.7,306.8 L209.2,306.1 L207.7,305.4 L206.1,304.7 L204.6,304.0 L203.1,303.3 L201.7,302.6 L200.2,301.9 L198.7,301.2 L197.3,300.5 L195.9,299.9 L194.4,299.2 L193.0,298.5 L191.6,297.8 L190.3,297.1 L188.9,296.5 L187.6,295.8 L186.2,295.1 L184.9,294.5 L183.6,293.8 L182.3,293.2 L181.1,292.5 L179.8,291.8 L178.5,291.2 L177.3,290.5 L176.1,289.9 L174.9,289.3 L173.7,288.6 L172.5,288.0 L171.4,287.4 L170.3,286.7 L169.1,286.1 L168.0,285.5 L166.9,284.9 L165.9,284.3 L164.8,283.7 L163.8,283.0 L162.7,282.4 L161.7,281.8 L160.7,281.3 L159.7,280.7 L158.8,280.1 L157.8,279.5 L156.9,278.9 L156.0,278.3 L155.1,277.8 L154.2,277.2 L153.3,276.6 L152.5,276.1 L151.7,275.5 L150.8,275.0 L150.0,274.4 L149.3,273.9 L148.5,273.4 L147.8,272.8 L147.0,272.3 L146.3,271.8 L145.6,271.3 L144.9,270.7 L144.3,270.2 L143.6,269.7 L143.0,269.2 L142.4,268.7 L141.8,268.2 L141.3,267.8 L140.7,267.3 L140.2,266.8 L139.7,266.3 L139.2,265.9 L138.7,265.4 L138.2,265.0 L137.8,264.5 L137.3,264.1 L136.9,263.6 L136.5,263.2 L136.2,262.8 L135.8,262.3 L135.5,261.9 L135.1,261.5 L134.8,261.1 L134.6,260.7 L134.3,260.3 L134.0,259.9 L133.8,259.5 L133.6,259.1 L133.4,258.7 L133.2,258.4 L133.1,258.0 L132.9,257.7 L132.8,257.3 L132.7,257.0 L132.6,256.6 L132.6,256.3 L132.5,255.9 L132.5,255.6Z" fill="url(#gc)"/>
<ellipse cx="396.75" cy="260.01" rx="252.78" ry="34.76" transform="rotate(17.99 396.75 260.01)" fill="url(#gt)" stroke="#0d0d0d" stroke-width="1" shape-rendering="crispEdges"/>
<path d="M132.5,255.3 L132.5,255.0 L132.5,254.7 L132.6,254.4 L132.7,254.1 L132.7,253.8 L132.8,253.5 L133.0,253.2 L133.1,253.0 L133.3,252.7 L133.4,252.4 L133.6,252.2 L133.8,251.9 L134.1,251.7 L134.3,251.5 L134.6,251.2 L134.9,251.0 L135.2,250.8 L135.5,250.6 L135.8,250.4 L136.2,250.2 L136.6,250.0 L137.0,249.8 L137.4,249.6 L137.8,249.4 L138.2,249.3 L138.7,249.1 L139.2,249.0 L139.7,248.8 L140.2,248.7 L140.8,248.5 L141.3,248.4 L141.9,248.3 L142.5,248.2 L143.1,248.1 L143.7,248.0 L144.3,247.9 L145.0,247.8 L145.7,247.7 L146.4,247.6 L147.1,247.5 L147.8,247.5 L148.6,247.4 L149.3,247.4 L150.1,247.3 L150.9,247.3 L151.7,247.2 L152.6,247.2 L153.4,247.2 L154.3,247.2 L155.2,247.2 L156.1,247.2 L157.0,247.2 L157.9,247.2 L158.9,247.2 L159.8,247.2 L160.8,247.3 L161.8,247.3 L162.8,247.3 L163.8,247.4 L164.9,247.4 L166.0,247.5 L167.0,247.6 L168.1,247.7 L169.2,247.7 L170.4,247.8 L171.5,247.9 L172.7,248.0 L173.8,248.1 L175.0,248.3 L176.2,248.4 L177.4,248.5 L178.7,248.6 L179.9,248.8 L181.2,248.9 L182.4,249.1 L183.7,249.2 L185.0,249.4 L186.4,249.6 L187.7,249.7 L189.0,249.9 L190.4,250.1 L191.8,250.3 L193.2,250.5 L194.6,250.7 L196.0,250.9 L197.4,251.2 L198.9,251.4 L200.3,251.6 L201.8,251.9 L203.3,252.1 L204.8,252.4 L206.3,252.6 L207.8,252.9 L209.3,253.2 L210.9,253.4 L212.4,253.7 L214.0,254.0 L215.6,254.3 L217.2,254.6 L218.8,254.9 L220.4,255.2 L222.1,255.5 L223.7,255.9 L225.4,256.2 L227.0,256.5 L228.7,256.9 L230.4,257.2 L232.1,257.6 L233.8,257.9 L235.5,258.3 L237.2,258.6 L239.0,259.0 L240.7,259.4 L242.5,259.8 L244.3,260.2 L246.1,260.6 L247.8,261.0 L249.6,261.4 L251.5,261.8 L253.3,262.2 L255.1,262.6 L256.9,263.1 L258.8,263.5 L260.6,263.9 L262.5,264.4 L264.4,264.8 L266.3,265.3 L268.2,265.7 L270.1,266.2 L272.0,266.7 L273.9,267.1 L275.8,267.6 L277.7,268.1 L279.7,268.6 L281.6,269.1 L283.5,269.6 L285.5,270.1 L287.5,270.6 L289.4,271.1 L291.4,271.6 L293.4,272.1 L295.4,272.7 L297.4,273.2 L299.4,273.7 L301.4,274.3 L303.4,274.8 L305.4,275.4 L307.4,275.9 L309.5,276.5 L311.5,277.0 L313.5,277.6 L315.6,278.2 L317.6,278.8 L319.7,279.3 L321.7,279.9 L323.8,280.5 L325.9,281.1 L327.9,281.7 L330.0,282.3 L332.1,282.9 L334.1,283.5 L336.2,284.1 L338.3,284.7 L340.4,285.3 L342.5,285.9 L344.6,286.6 L346.7,287.2 L348.7,287.8 L350.8,288.4 L352.9,289.1 L355.0,289.7 L357.1,290.4 L359.2,291.0 L361.3,291.7 L363.4,292.3 L365.6,293.0 L367.7,293.6 L369.8,294.3 L371.9,294.9 L374.0,295.6 L376.1,296.3 L378.2,297.0 L380.3,297.6 L382.4,298.3 L384.5,299.0 L386.6,299.7 L388.7,300.4 L390.8,301.0 L392.9,301.7 L395.0,302.4 L397.1,303.1 L399.2,303.8 L401.3,304.5 L403.4,305.2 L405.5,305.9 L407.6,306.6 L409.7,307.3 L411.7,308.0 L413.8,308.7 L415.9,309.5 L418.0,310.2 L420.0,310.9 L422.1,311.6 L424.2,312.3 L426.2,313.0 L428.3,313.8 L430.3,314.5 L432.4,315.2 L434.4,315.9 L436.4,316.7 L438.5,317.4 L440.5,318.1 L442.5,318.8 L444.5,319.6 L446.6,320.3 L448.6,321.0 L450.6,321.8 L452.6,322.5 L454.5,323.2 L456.5,324.0 L458.5,324.7 L460.5,325.4 L462.4,326.2 L464.4,326.9 L466.3,327.7 L468.3,328.4 L470.2,329.1 L472.1,329.9 L474.1,330.6 L476.0,331.3 L477.9,332.1 L479.8,332.8 L481.7,333.6 L483.5,334.3 L485.4,335.0 L487.3,335.8 L489.1,336.5 L491.0,337.3 L492.8,338.0 L494.7,338.7 L496.5,339.5 L498.3,340.2 L500.1,340.9 L501.9,341.7 L503.7,342.4 L505.4,343.1 L507.2,343.9 L508.9,344.6 L510.7,345.3 L512.4,346.1 L514.1,346.8 L515.8,347.5 L517.5,348.2 L519.2,349.0 L520.9,349.7 L522.6,350.4 L524.2,351.1 L525.9,351.8 L527.5,352.6 L529.1,353.3 L530.7,354.0 L532.3,354.7 L533.9,355.4 L535.5,356.1 L537.0,356.8 L538.6,357.5 L540.1,358.2 L541.6,358.9 L543.1,359.6 L544.6,360.3 L546.1,361.0 L547.6,361.7 L549.0,362.4 L550.5,363.1 L551.9,363.8 L553.3,364.5 L554.7,365.1 L556.1,365.8 L557.5,366.5 L558.8,367.2 L560.2,367.8 L561.5,368.5 L562.8,369.2 L564.1,369.8 L565.4,370.5 L566.7,371.1 L568.0,371.8 L569.2,372.4 L570.4,373.1 L571.7,373.7 L572.9,374.4 L574.0,375.0 L575.2,375.6 L576.4,376.3 L577.5,376.9 L578.6,377.5 L579.7,378.1 L580.8,378.8 L581.9,379.4 L583.0,380.0 L584.0,380.6 L585.0,381.2 L586.0,381.8 L587.0,382.4 L588.0,383.0 L589.0,383.6 L589.9,384.1 L590.9,384.7 L591.8,385.3 L592.7,385.9 L593.6,386.4 L594.4,387.0 L595.3,387.6 L596.1,388.1 L596.9,388.7 L597.7,389.2 L598.5,389.7 L599.3,390.3 L600.0,390.8 L600.7,391.3 L601.4,391.9 L602.1,392.4 L602.8,392.9 L603.5,393.4 L604.1,393.9 L604.7,394.4 L605.3,394.9 L605.9,395.4 L606.5,395.9 L607.1,396.4 L607.6,396.8 L608.1,397.3 L608.6,397.8 L609.1,398.2 L609.6,398.7 L610.0,399.1 L610.4,399.6 L610.8,400.0 L611.2,400.5 L611.6,400.9 L612.0,401.3 L612.3,401.7 L612.6,402.1 L612.9,402.6 L613.2,403.0 L613.5,403.4 L613.7,403.7 L613.9,404.1 L614.2,404.5 L614.3,404.9 L614.5,405.3 L614.7,405.6 L614.8,406.0 L614.9,406.3 L615.0,406.7 L615.1,407.0 L615.2,407.4 L615.2,407.7 L615.2,408.0 L615.3,408.3 L615.2,408.7 L615.2,409.0 L615.2,409.3 L615.1,409.6 L615.0,409.8 L614.9,410.1 L614.8,410.4 L614.7,410.7 L614.5,410.9 L614.3,411.2 L614.1,411.5 L613.9,411.7 L613.7,411.9 L613.4,412.2 L613.2,412.4 L612.9,412.6 L612.6,412.9 L612.3,413.1 L611.9,413.3 L611.6,413.5 L611.2,413.7 L548.5,444.9 L548.2,445.1 L547.8,445.2 L547.5,445.4 L547.1,445.5 L546.8,445.6 L546.4,445.7 L546.0,445.9 L545.6,446.0 L545.1,446.1 L544.7,446.2 L544.2,446.3 L543.8,446.4 L543.3,446.5 L542.8,446.6 L542.3,446.7 L541.7,446.7 L541.2,446.8 L540.6,446.9 L540.1,446.9 L539.5,447.0 L538.9,447.0 L538.3,447.1 L537.7,447.1 L537.0,447.1 L536.4,447.2 L535.7,447.2 L535.0,447.2 L534.3,447.2 L533.6,447.2 L532.9,447.2 L532.2,447.2 L531.4,447.2 L530.7,447.2 L529.9,447.2 L529.1,447.2 L528.3,447.1 L527.5,447.1 L526.7,447.1 L525.8,447.0 L525.0,447.0 L524.1,446.9 L523.3,446.9 L522.4,446.8 L521.5,446.7 L520.6,446.7 L519.6,446.6 L518.7,446.5 L517.8,446.4 L516.8,446.3 L515.8,446.2 L514.8,446.1 L513.9,446.0 L512.8,445.9 L511.8,445.8 L510.8,445.6 L509.8,445.5 L508.7,445.4 L507.6,445.2 L506.6,445.1 L505.5,444.9 L504.4,444.8 L503.3,444.6 L502.1,444.5 L501.0,444.3 L499.9,444.1 L498.7,443.9 L497.5,443.8 L496.4,443.6 L495.2,443.4 L494.0,443.2 L492.8,443.0 L491.6,442.8 L490.3,442.6 L489.1,442.3 L487.9,442.1 L486.6,441.9 L485.3,441.7 L484.1,441.4 L482.8,441.2 L481.5,440.9 L480.2,440.7 L478.9,440.4 L477.5,440.2 L476.2,439.9 L474.9,439.6 L473.5,439.3 L472.2,439.1 L470.8,438.8 L469.4,438.5 L468.0,438.2 L466.6,437.9 L465.2,437.6 L463.8,437.3 L462.4,437.0 L461.0,436.7 L459.6,436.4 L458.1,436.0 L456.7,435.7 L455.2,435.4 L453.8,435.0 L452.3,434.7 L450.8,434.4 L449.3,434.0 L447.8,433.7 L446.4,433.3 L444.8,432.9 L443.3,432.6 L441.8,432.2 L440.3,431.8 L438.8,431.5 L437.2,431.1 L435.7,430.7 L434.1,430.3 L432.6,429.9 L431.0,429.5 L429.5,429.1 L427.9,428.7 L426.3,428.3 L424.8,427.9 L423.2,427.5 L421.6,427.1 L420.0,426.6 L418.4,426.2 L416.8,425.8 L415.2,425.4 L413.6,424.9 L412.0,424.5 L410.3,424.0 L408.7,423.6 L407.1,423.1 L405.4,422.7 L403.8,422.2 L402.2,421.8 L400.5,421.3 L398.9,420.8 L397.2,420.4 L395.6,419.9 L393.9,419.4 L392.3,419.0 L390.6,418.5 L389.0,418.0 L387.3,417.5 L385.6,417.0 L384.0,416.5 L382.3,416.0 L380.6,415.5 L379.0,415.0 L377.3,414.5 L375.6,414.0 L373.9,413.5 L372.2,413.0 L370.6,412.5 L368.9,412.0 L367.2,411.4 L365.5,410.9 L363.8,410.4 L362.2,409.9 L360.5,409.3 L358.8,408.8 L357.1,408.3 L355.4,407.7 L353.7,407.2 L352.1,406.7 L350.4,406.1 L348.7,405.6 L347.0,405.0 L345.3,404.5 L343.7,403.9 L342.0,403.4 L340.3,402.8 L338.6,402.3 L337.0,401.7 L335.3,401.2 L333.6,400.6 L332.0,400.1 L330.3,399.5 L328.6,398.9 L327.0,398.4 L325.3,397.8 L323.7,397.2 L322.0,396.7 L320.4,396.1 L318.7,395.5 L317.1,394.9 L315.4,394.4 L313.8,393.8 L312.1,393.2 L310.5,392.6 L308.9,392.1 L307.3,391.5 L305.6,390.9 L304.0,390.3 L302.4,389.7 L300.8,389.1 L299.2,388.6 L297.6,388.0 L296.0,387.4 L294.4,386.8 L292.8,386.2 L291.3,385.6 L289.7,385.0 L288.1,384.5 L286.6,383.9 L285.0,383.3 L283.5,382.7 L281.9,382.1 L280.4,381.5 L278.8,380.9 L277.3,380.3 L275.8,379.7 L274.3,379.2 L272.8,378.6 L271.3,378.0 L269.8,377.4 L268.3,376.8 L266.8,376.2 L265.3,375.6 L263.9,375.0 L262.4,374.4 L260.9,373.9 L259.5,373.3 L258.1,372.7 L256.6,372.1 L255.2,371.5 L253.8,370.9 L252.4,370.3 L251.0,369.8 L249.6,369.2 L248.2,368.6 L246.8,368.0 L245.5,367.4 L244.1,366.9 L242.8,366.3 L241.4,365.7 L240.1,365.1 L238.8,364.6 L237.5,364.0 L236.2,363.4 L234.9,362.8 L233.6,362.3 L232.3,361.7 L231.0,361.1 L229.8,360.6 L228.5,360.0 L227.3,359.4 L226.1,358.9 L224.9,358.3 L223.7,357.8 L222.5,357.2 L221.3,356.6 L220.1,356.1 L219.0,355.5 L217.8,355.0 L216.7,354.4 L215.5,353.9 L214.4,353.4 L213.3,352.8 L212.2,352.3 L211.1,351.7 L210.0,351.2 L209.0,350.7 L207.9,350.1 L206.9,349.6 L205.9,349.1 L204.8,348.6 L203.8,348.0 L202.8,347.5 L201.9,347.0 L200.9,346.5 L199.9,346.0 L199.0,345.5 L198.0,345.0 L197.1,344.5 L196.2,344.0 L195.3,343.5 L194.4,343.0 L193.6,342.5 L192.7,342.0 L191.9,341.5 L191.0,341.0 L190.2,340.5 L189.4,340.0 L188.6,339.6 L187.8,339.1 L187.0,338.6 L186.3,338.2 L185.5,337.7 L184.8,337.2 L184.1,336.8 L183.4,336.3 L182.7,335.9 L182.0,335.4 L181.4,335.0 L180.7,334.5 L180.1,334.1 L179.5,333.7 L178.8,333.2 L178.2,332.8 L177.7,332.4 L177.1,332.0 L176.5,331.6 L176.0,331.2 L175.5,330.7 L175.0,330.3 L174.5,329.9 L174.0,329.5 L173.5,329.1 L173.1,328.8 L172.6,328.4 L172.2,328.0 L171.8,327.6 L171.4,327.2 L171.0,326.9 L170.6,326.5 L170.3,326.1 L169.9,325.8 L169.6,325.4 L169.3,325.1 L169.0,324.7 L168.7,324.4 L168.4,324.1 L168.2,323.7 L167.9,323.4 L167.7,323.1 L167.5,322.8 L167.3,322.5 L167.1,322.1 L167.0,321.8 L133.6,259.1 L133.4,258.7 L133.2,258.4 L133.1,258.0 L132.9,257.7 L132.8,257.3 L132.7,257.0 L132.6,256.6 L132.6,256.3 L132.5,255.9 L132.5,255.6Z" fill="none" stroke="#14c814" stroke-width="1" shape-rendering="crispEdges"/>
<ellipse cx="373.88" cy="331.82" rx="253.45" ry="34.51" transform="rotate(17.93 373.88 331.82)" fill="none" stroke="#14c814" stroke-width="1" shape-rendering="crispEdges"/>
<ellipse cx="358.91" cy="379.7" rx="202.42" ry="27.77" transform="rotate(17.88 358.91 379.7)" fill="none" stroke="#14c814" stroke-width="1" shape-rendering="crispEdges"/>
<g stroke="#8e5a5a" stroke-width="1" fill="none">
<path d="M381.5,257 L396.8,260.4 L410.6,266.7"/>
<path d="M396.8,260.4 L390.5,280"/>
<path d="M386.4,291 L378.5,318.4" stroke-dasharray="3.5,3"/>
</g>
<path d="M388.2,257.2 L387.6,259.3 L389.8,258.6 Z M403.8,262 L404.6,264.2 L402.6,264.4 Z M391.6,274.5 L390.2,278.2 L392.8,277.6 Z" fill="#8e5a5a"/>
<g stroke="#9a5e5e" stroke-width="0.95" fill="none" stroke-linejoin="round">
<path transform="translate(398.9,250.5)" d="M0,0 L0,8.4 L2.145,8.4 Q3.9,8.4 3.9,6.2 L3.9,2.2 Q3.9,0 2.145,0 Z"/>
<path transform="translate(404.95,250.5)" d="M3.9,0 L0,0 L0,8.4 L3.9,8.4 M0,4.2 L3.12,4.2"/>
<path transform="translate(411.0,250.5)" d="M3.9,0 L0,0 L0,8.4 M0,4.2 L3.12,4.2"/>
<path transform="translate(417.04999999999995,250.5)" d="M0,8.4 L1.95,0 L3.9,8.4 M0.78,5.208 L3.12,5.208"/>
<path transform="translate(423.09999999999997,250.5)" d="M0,0 L0,6.800000000000001 Q0,8.4 1.95,8.4 Q3.9,8.4 3.9,6.800000000000001 L3.9,0"/>
<path transform="translate(429.15,250.5)" d="M0,0 L0,8.4 L3.9,8.4"/>
<path transform="translate(435.2,250.5)" d="M0,0 L3.9,0 M1.95,0 L1.95,8.4"/>
<path transform="translate(441.25,250.5)" d="M0,8.4 L3.9,8.4"/>
<path transform="translate(447.29999999999995,250.5)" d="M3.9,1.3 Q3.315,0 1.95,0 Q0,0 0,2.2 L0,6.2 Q0,8.4 1.95,8.4 Q3.315,8.4 3.9,7.1000000000000005"/>
<path transform="translate(453.34999999999997,250.5)" d="M3.9,1.3 Q3.315,0 1.95,0 Q0,0 0,2.2 Q0,4.2 1.95,4.2 Q3.9,4.2 3.9,6.2 Q3.9,8.4 1.95,8.4 Q0.585,8.4 0,7.1000000000000005"/>
<path transform="translate(459.4,250.5)" d="M0,0 L1.95,4.2 L3.9,0 M1.95,4.2 L1.95,8.4"/>
<path transform="translate(465.45,250.5)" d="M3.9,1.3 Q3.315,0 1.95,0 Q0,0 0,2.2 Q0,4.2 1.95,4.2 Q3.9,4.2 3.9,6.2 Q3.9,8.4 1.95,8.4 Q0.585,8.4 0,7.1000000000000005"/>
</g>
<g stroke="#111" stroke-width="1.05" fill="none">
<path transform="translate(375.4,248.3)" d="M0,0 L3.4,7.2 M3.4,0 L0,7.2"/>
<path transform="translate(413.0,268.6)" d="M0,0 L3.5,0 L0,7.8 L3.5,7.8"/>
<path transform="translate(384.0,281.8)" d="M0,0 L1.8,3.5 L3.6,0 M1.8,3.5 L1.8,7.0"/>
</g>
<path d="M366.3,317.8 L378.2,319.9" stroke="#ff3030" stroke-width="1.3"/>
<path d="M378.2,319.9 L387.2,324.5" stroke="#30e0f0" stroke-width="1.3"/>
<path d="M377.5,320.4 L373,334.3" stroke="#30d030" stroke-width="1.3"/>
<circle cx="366.3" cy="317.8" r="2.4" fill="#ff3535"/>
<circle cx="387.2" cy="324.5" r="2.8" fill="#3cf0ff"/>
<circle cx="373" cy="334.3" r="2.3" fill="#2fd52f"/>
</svg>
<div style="position:absolute;left:268px;top:120px;width:321px;height:30px;border:1px solid #a2a2a2;background:#f7f7f7"></div>
<div style="position:absolute;left:537px;top:124px;width:21px;height:21px;border:1px solid #a9a9a9;background:#dedede"></div>
<div style="position:absolute;left:563px;top:124px;width:21px;height:21px;border:1px solid #a9a9a9;background:#dedede"></div>
<svg style="left:0;top:0" width="685" height="485" viewBox="0 0 685 485">
<rect x="276.5" y="127.5" width="14" height="14" fill="#fdfdfd" stroke="#b4b4b4"/>
<path d="M287.3,137.8 L291,141.5" stroke="#8a8a8a" stroke-width="2.6" stroke-linecap="round"/><path d="M287.3,137.8 L291,141.5" stroke="#e0e0e0" stroke-width="1" stroke-linecap="round"/>
<circle cx="283.7" cy="134" r="4.6" fill="#e4f3fa" stroke="#3d8cb5" stroke-width="1.1"/>
<path d="M311.9,137.4 L316.7,142" stroke="#8a8a8a" stroke-width="2.6" stroke-linecap="round"/><path d="M311.9,137.4 L316.7,142" stroke="#e0e0e0" stroke-width="1" stroke-linecap="round"/>
<circle cx="307.7" cy="133.1" r="5.6" fill="#eaf5fb" stroke="#3d8cb5" stroke-width="1.1"/>
<path d="M304.7,133.1 L310.7,133.1" stroke="#1a5f8c" stroke-width="2.2"/>
<path d="M307.7,130.1 L307.7,136.1" stroke="#1a5f8c" stroke-width="2.2"/>
<path d="M337.8,137.4 L342.6,142" stroke="#8a8a8a" stroke-width="2.6" stroke-linecap="round"/><path d="M337.8,137.4 L342.6,142" stroke="#e0e0e0" stroke-width="1" stroke-linecap="round"/>
<circle cx="333.6" cy="133.1" r="5.6" fill="#eaf5fb" stroke="#3d8cb5" stroke-width="1.1"/>
<path d="M330.6,133.1 L336.6,133.1" stroke="#1a5f8c" stroke-width="2.2"/>
<defs><linearGradient id="tg4" x1="1" y1="0" x2="0" y2="1"><stop offset="0" stop-color="#6fb8d6"/><stop offset="0.6" stop-color="#bfe3f0"/><stop offset="1" stop-color="#ffffff"/></linearGradient><radialGradient id="tg5" cx="0.4" cy="0.35" r="0.75"><stop offset="0" stop-color="#ffffff"/><stop offset="0.55" stop-color="#e6e6e6"/><stop offset="1" stop-color="#8f8f8f"/></radialGradient><linearGradient id="tg7" x1="0" y1="0" x2="1" y2="1"><stop offset="0" stop-color="#ffffff"/><stop offset="1" stop-color="#d8eef8"/></linearGradient><linearGradient id="tg5b" x1="0" y1="0" x2="1" y2="1"><stop offset="0" stop-color="#f5f5f5"/><stop offset="1" stop-color="#a0a0a0"/></linearGradient></defs>
<rect x="354.5" y="127.5" width="15" height="15" fill="url(#tg4)" stroke="#a9a9a9"/>
<path d="M355,131 Q362,130 366,134 L358,142 L355,142 Z" fill="#fff" opacity="0.9"/>
<path d="M358,141.3 L367,133.5" stroke="#1f6e9c" stroke-width="1.6"/>
<path d="M387.2,130.5 L389.8,127.5 L396,127.5 L396,134.8 L393.5,137.3 L387.2,137.3 Z" fill="#f4f4f4"/>
<path d="M393.5,130.5 L396,127.5 L396,134.8 L393.5,137.3 Z" fill="#b9b9b9"/>
<path d="M387.2,130.5 L393.5,130.5 L396,127.5 L389.8,127.5 Z" fill="#fdfdfd"/>
<circle cx="385.3" cy="138.3" r="5.2" fill="url(#tg5)"/>
<path d="M396,144.3 L399,141.3 L399,144.3 Z" fill="#444"/>
<path d="M407.5,131.5 L411.5,127.5 L422.5,127.5 L422.5,138.5 L418.5,142.5 L407.5,142.5 Z" fill="#9fd3ea" stroke="#1b6b98" stroke-width="1.2"/>
<rect x="407.5" y="131.5" width="11" height="11" fill="#fff" stroke="#1b6b98" stroke-width="1.2"/>
<path d="M418.5,131.5 L422.5,127.5" stroke="#1b6b98" stroke-width="1"/>
<path d="M423,144.3 L426,141.3 L426,144.3 Z" fill="#444"/>
<path d="M434,130.5 L437.5,127 L449,127 L449,138.5 L445.5,142 L434,142 Z" fill="#bfe2f2"/>
<path d="M445.5,130.5 L449,127 L449,138.5 L445.5,142 Z" fill="#8ccbe6"/>
<rect x="434.5" y="130.5" width="11" height="11.5" fill="url(#tg7)" stroke="#8fcbe6" stroke-width="1"/>
<rect x="442.5" y="134.5" width="7.5" height="8.5" fill="#f6f6f6" stroke="#8c8c8c" stroke-width="1"/>
<path d="M443.8,136.7h0.8M445.5,136.7h3M443.8,138.7h0.8M445.5,138.7h3M443.8,140.7h0.8M445.5,140.7h3" stroke="#777" stroke-width="0.8"/>
<path d="M450.5,145 L453.5,142 L453.5,145 Z" fill="#444"/>
<rect x="461" y="127" width="13.5" height="14" fill="#fbfbfb" stroke="#9a9a9a" stroke-width="1"/>
<path d="M461,130.5h13.5M461,134h13.5M461,137.5h13.5M464.5,127v14" stroke="#b5b5b5" stroke-width="1"/>
<rect x="466.5" y="136" width="10.5" height="7" rx="1" fill="#3a3a3a"/><rect x="468.5" y="134.8" width="4" height="2" fill="#3a3a3a"/>
<circle cx="471.7" cy="139.4" r="2.3" fill="#c8c8c8" stroke="#222" stroke-width="0.8"/>
<path d="M487.2,131.2 L492.5,127 L503,126.8 L502.2,138.5 L498,142.6 L488.8,139.5 Z" fill="#c4e5f2" stroke="#5aaace" stroke-width="1"/>
<path d="M490.2,131.8 L501,128.8 L500.2,141.5 L495.8,141.2 Z" fill="#eef8fc"/>
<path d="M487.2,131.2 L501,128.8 L503,126.8 M501,128.8 L500,141.8" stroke="#5aaace" stroke-width="0.9" fill="none"/>
<path d="M491,139 L497.5,135.5 M492.5,140 L499,136.8 M494.5,141 L499.8,138.5" stroke="#9fd2e8" stroke-width="1"/>
<path d="M489,133 L490,139" stroke="#dbeff7" stroke-width="1.5"/>
<g stroke="#80602a" stroke-width="1.5" fill="none" stroke-linecap="butt"><path d="M513,127.3 L517.6,131.6 M517.6,127.3 L513,131.6"/><path d="M523.3,127 L521.8,130.5 M520.6,133.2 L519,136.8 M517.8,139.2 L516.2,142.8"/><path d="M523.4,138.6 L523.4,133.6 M523.4,138.6 L528.6,138.6 M523.4,138.6 L520.3,141.7"/></g>
<path d="M521.3,134.6 L523.4,132 L525.5,134.6 Z M527.2,136.5 L529.6,138.6 L527.2,140.7 Z M519.6,139.2 L519.5,142.4 L522.6,142.3 Z" fill="#80602a"/>
<path d="M529,145.4 L532,142.4 L532,145.4 Z" fill="#444"/>
<rect x="540.5" y="127.5" width="9" height="6" fill="#fff6dc" stroke="#777" stroke-width="1"/>
<path d="M549.5,130 L555.5,130 L555.5,134 M553.3,132 L553,135.5 L556.5,135.2" stroke="#333" stroke-width="1.3" fill="none"/>
<path d="M546,140.5 Q550.5,135.5 555,140.5 Q550.5,145.5 546,140.5 Z" fill="#333"/><circle cx="550.5" cy="140.5" r="1.3" fill="#eee"/>
<path d="M569.5,131 L573,135.7 L579,135.7 M573,135.7 L569.5,140.8" stroke="#333" stroke-width="1.1" fill="none"/>
<circle cx="569.4" cy="130.5" r="2.6" fill="#6db56d" stroke="#3f8f3f" stroke-width="0.7"/>
<circle cx="579.6" cy="135.7" r="2.6" fill="#e0706c" stroke="#b84a46" stroke-width="0.7"/>
<circle cx="569.4" cy="140.9" r="2.6" fill="#3f8fbf" stroke="#2a6f99" stroke-width="0.7"/>
</svg>
</body></html>
